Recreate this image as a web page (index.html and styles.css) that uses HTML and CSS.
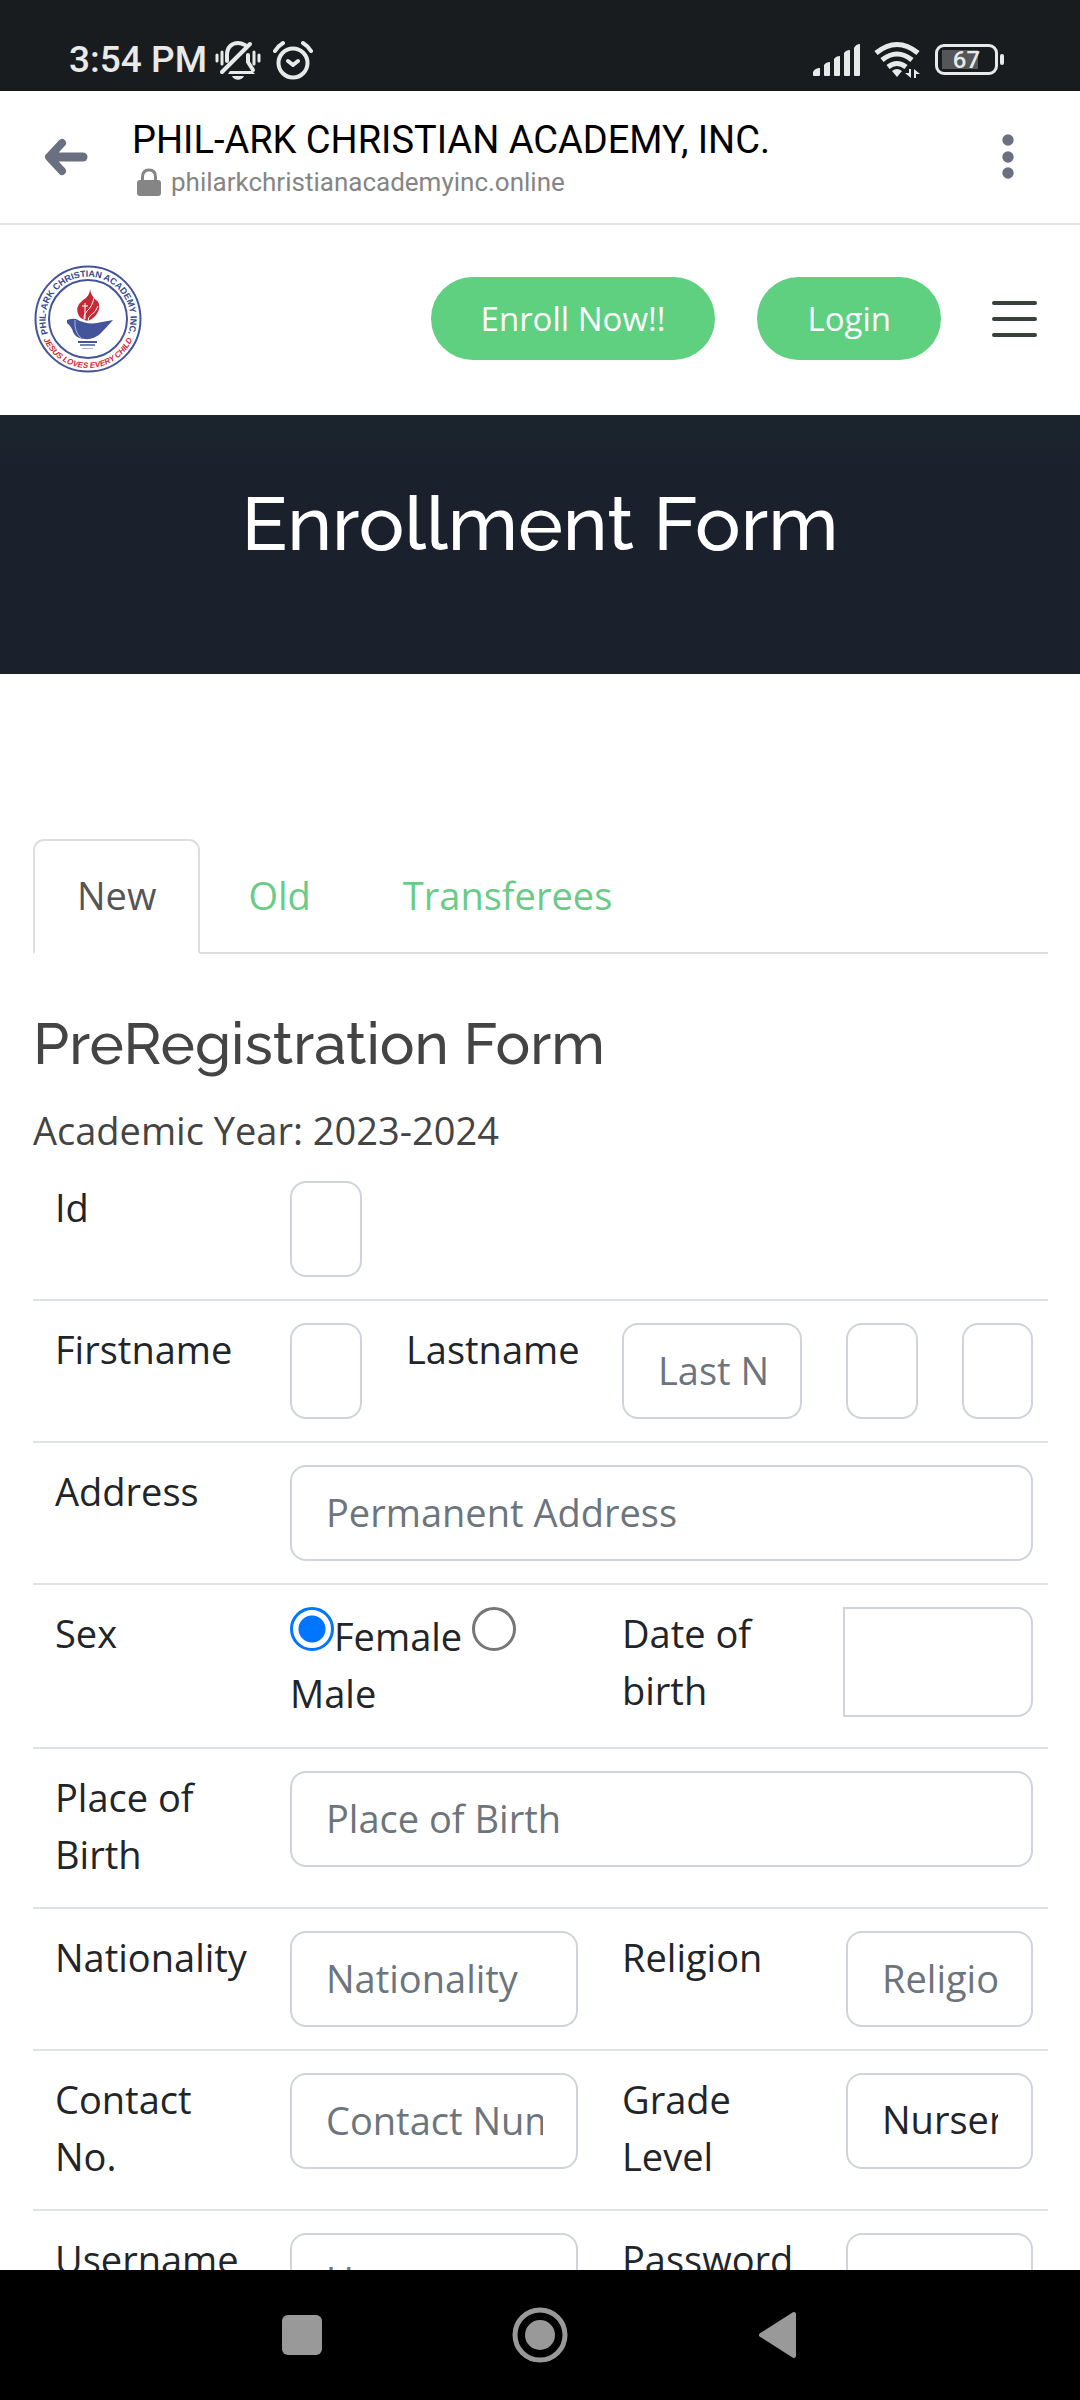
FILE: index.html
```html
<!DOCTYPE html>
<html lang="en">
<head>
<meta charset="utf-8">
<meta name="viewport" content="width=device-width, initial-scale=1">
<title>PHIL-ARK CHRISTIAN ACADEMY, INC.</title>
<link rel="stylesheet" href="styles.css">
</head>
<body>
<div class="status-bar">
  <span class="clock">3:54 PM</span>
  <svg class="status-bell" width="46" height="40" viewBox="0 0 46 40" fill="none" stroke="#e8e9e9" stroke-width="4" stroke-linecap="round" aria-hidden="true">
    <path d="M2 15v6M7 12v12M39 12v12M44 15v6" stroke-width="3"/>
    <path d="M12 21v-6C12 7 17 3 23 3c3 0 5 1 7 2M33 15v7l5 8"/>
    <path d="M7 32L35 4"/>
    <path d="M15 31h22l3 3H13z" fill="#e8e9e9" stroke="none"/>
    <path d="M17 36h12c-2 5-10 5-12 0z" fill="#e8e9e9" stroke="none"/>
  </svg>
  <svg class="status-alarm" width="40" height="40" viewBox="0 0 40 40" fill="none" stroke="#e8e9e9" stroke-width="4" stroke-linecap="round" stroke-linejoin="round" aria-hidden="true">
    <circle cx="20" cy="23" r="14.500"/>
    <path d="M15 21l5 4 5-4M2 11q3-5 8-8M38 11q-3-5-8-8"/>
  </svg>
  <div class="status-right">
    <svg width="48" height="34" viewBox="0 0 48 34" fill="#e8e9e9" aria-hidden="true">
      <path d="M0 32v-3q2-4 7-4v7q0 1-1 1H1q-1 0-1-1zM11 32V22q2-3 6-3v13q0 1-1 1h-4q-1 0-1-1zM21 32V16q2-3 6-3v19q0 1-1 1h-4q-1 0-1-1zM31 32V10q2-3 6-3v25q0 1-1 1h-4q-1 0-1-1zM41 32V5q2-4 6-4v31q0 1-1 1h-4q-1 0-1-1z"/>
    </svg>
    <svg width="48" height="38" viewBox="0 0 48 38" fill="none" stroke="#e8e9e9" stroke-width="5" aria-hidden="true">
      <path d="M2 12q21-17 42 0M8 19q15-12 30 0M14 26q9-7 18 0"/>
      <path d="M18 30q5-4 10 0l-5 6z" fill="#e8e9e9" stroke="none"/>
      <path d="M37 28v9l-6-5h4v-4zM40 37v-9l6 5h-4v4z" fill="#e8e9e9" stroke="none"/>
    </svg>
    <div class="battery"><span class="battery-level">67</span></div>
  </div>
</div>

<div class="browser-bar">
  <button class="icon-button" aria-label="Back">
    <svg width="44" height="38" viewBox="0 0 44 38" fill="none" stroke="#6b7080" stroke-linecap="round" stroke-linejoin="round" aria-hidden="true">
      <path d="M18 5L5 19l13 14" stroke-width="8"/>
      <path d="M8 19h31" stroke-width="9"/>
      <path d="M7 19l7-8v16z" fill="#6b7080" stroke-width="2"/>
    </svg>
  </button>
  <div class="page-info">
    <div class="page-title">PHIL-ARK CHRISTIAN ACADEMY, INC.</div>
    <div class="page-url">
      <svg width="24" height="28" viewBox="0 0 24 28" aria-hidden="true">
        <path d="M5.500 13V9q0-7 6.500-7t6.500 7v4" fill="none" stroke="#858585" stroke-width="3"/>
        <rect y="12" width="24" height="16" rx="3" fill="#858585"/>
      </svg>
      <span>philarkchristianacademyinc.online</span>
    </div>
  </div>
  <button class="icon-button" aria-label="More options">
    <svg width="12" height="46" viewBox="0 0 12 46" fill="#6b7080" aria-hidden="true">
      <circle cx="6" cy="6" r="5.700"/><circle cx="6" cy="23" r="5.700"/><circle cx="6" cy="39" r="5.700"/>
    </svg>
  </button>
</div>

<div class="viewport">
  <header class="site-header">
    <a class="logo" href="#" aria-label="Home">
      <svg width="110" height="110" viewBox="-55 -55 110 110" aria-hidden="true">
        <defs>
          <path id="arc-top" d="M-37 21A42.500 42.500 0 1 1 37 21"/>
          <path id="arc-bottom" d="M-49 0A49 49 0 0 0 49 0"/>
        </defs>
        <circle r="52.500" fill="#fff" stroke="#43549a" stroke-width="2"/>
        <circle r="39" fill="none" stroke="#43549a" stroke-width="2"/>
        <text class="seal-name"><textPath href="#arc-top" startOffset="50%">PHIL-ARK CHRISTIAN ACADEMY INC.</textPath></text>
        <text class="seal-motto"><textPath href="#arc-bottom" startOffset="50%">JESUS LOVES EVERY CHILD</textPath></text>
        <path d="M2-30Q2-23-5-19-14-12-9-3-6 1 0 2 9-2 11-10 12-17 8-19 3-23 2-30z" fill="#c32a36"/>
        <path d="M6-21Q4-12-1-8-5-4-4 1M10-13Q8-7 3-4 0-2 0 2M-3-16V0M-6-13h6" fill="none" stroke="#fff"/>
        <path d="M-21 1q6-2 9-1Q0 7 14 3L25 1Q18 9 12 15 5 21-3 20q-9 0-12-7-1-5-6-9z" fill="#43549a"/>
        <path d="M-13 1q-1 12 6 18" fill="none" stroke="#aeb8d8"/>
        <path d="M-10 23H9" stroke="#43549a" stroke-width="2"/>
        <path d="M-8 26H7" stroke="#7582b4" stroke-width="2"/>
        <path d="M-6 29.500H5" stroke="#aab2d0"/>
      </svg>
    </a>
    <a class="pill" href="#enroll">Enroll Now!!</a>
    <a class="pill" href="#login">Login</a>
    <button class="menu-button" aria-label="Menu"><i></i><i></i><i></i></button>
  </header>

  <section class="hero"><h1>Enrollment Form</h1></section>

  <main class="content">
    <nav class="tabs">
      <a class="tab active" href="#new" aria-current="page">New</a>
      <a class="tab" href="#old">Old</a>
      <a class="tab" href="#transferees">Transferees</a>
    </nav>
    <h2>PreRegistration Form</h2>
    <p class="year">Academic Year: 2023-2024</p>
    <form>
      <table class="form-table">
        <colgroup><col class="col-label"><col class="col-small"><col class="col-mid"><col><col class="col-small"><col class="col-end"></colgroup>
        <tr>
          <th><label for="id">Id</label></th>
          <td><input class="field" id="id" type="text"></td>
          <td colspan="4"></td>
        </tr>
        <tr>
          <th><label for="first">Firstname</label></th>
          <td><input class="field" id="first" type="text"></td>
          <th><label for="last">Lastname</label></th>
          <td><input class="field" id="last" type="text" placeholder="Last Name"></td>
          <td><input class="field" type="text" aria-label="Middle name"></td>
          <td><input class="field" type="text" aria-label="Suffix"></td>
        </tr>
        <tr>
          <th><label for="address">Address</label></th>
          <td colspan="5"><input class="field" id="address" type="text" placeholder="Permanent Address"></td>
        </tr>
        <tr class="tall-row">
          <th>Sex</th>
          <td colspan="2"><input class="radio" type="radio" name="sex" id="female" checked><label for="female">Female</label> <input class="radio" type="radio" name="sex" id="male"> <label for="male">Male</label></td>
          <th><label for="dob">Date of<br>birth</label></th>
          <td class="date-cell" colspan="2"><input class="field date" id="dob" type="text"></td>
        </tr>
        <tr>
          <th><label for="place">Place of Birth</label></th>
          <td colspan="5"><input class="field" id="place" type="text" placeholder="Place of Birth"></td>
        </tr>
        <tr>
          <th><label for="nationality">Nationality</label></th>
          <td colspan="2"><input class="field" id="nationality" type="text" placeholder="Nationality"></td>
          <th><label for="religion">Religion</label></th>
          <td colspan="2"><input class="field" id="religion" type="text" placeholder="Religion"></td>
        </tr>
        <tr>
          <th><label for="contact">Contact No.</label></th>
          <td colspan="2"><input class="field" id="contact" type="text" placeholder="Contact Number"></td>
          <th><label for="grade">Grade Level</label></th>
          <td colspan="2"><select class="field" id="grade"><option>Nursery</option></select></td>
        </tr>
        <tr>
          <th><label for="username">Username</label></th>
          <td colspan="2"><input class="field" id="username" type="text" placeholder="Username"></td>
          <th><label for="password">Password</label></th>
          <td colspan="2"><input class="field" id="password" type="password"></td>
        </tr>
      </table>
    </form>
  </main>
</div>

<nav class="system-nav">
  <button class="icon-button" aria-label="Recent apps"><svg width="40" height="40" viewBox="0 0 40 40"><rect width="40" height="40" rx="6" fill="#999"/></svg></button>
  <button class="icon-button" aria-label="Home screen"><svg width="56" height="56" viewBox="0 0 56 56"><circle cx="28" cy="28" r="25" fill="none" stroke="#999" stroke-width="5"/><circle cx="28" cy="28" r="15" fill="#999"/></svg></button>
  <button class="icon-button" aria-label="Go back"><svg width="40" height="48" viewBox="0 0 40 48"><path d="M36 3v42L3 24z" fill="#999" stroke="#999" stroke-width="4" stroke-linejoin="round"/></svg></button>
</nav>
</body>
</html>
```
FILE: styles.css
```css
* {
  box-sizing: border-box;
}

body {
  margin: 0;
  height: 100vh;
  display: flex;
  flex-direction: column;
  overflow: hidden;
  background: #fff;
  color: #444;
  font: 38px/57px "Open Sans", "Noto Sans", sans-serif;
}

svg {
  display: block;
}

button {
  padding: 0;
  border: 0;
  background: none;
}

a {
  text-decoration: none;
}

/* Phone status bar */
.status-bar {
  flex: none;
  height: 91px;
  padding: 28px 82px 0 69px;
  display: flex;
  align-items: center;
  background: #191c1e;
  color: #e8e9e9;
  font-family: Roboto, sans-serif;
}

.clock {
  font-size: 37px;
  font-weight: 500;
}

.status-bell {
  margin-left: 8px;
}

.status-alarm {
  margin-left: 12px;
}

.status-right {
  margin-left: auto;
  display: flex;
  align-items: center;
  gap: 13px;
}

.battery {
  position: relative;
  width: 63px;
  height: 31px;
  border: 3px solid #e8e9e9;
  border-radius: 9px;
  background: linear-gradient(to right, #555658 36px, transparent 36px) 4px 3px / 52px 19px no-repeat;
  text-align: center;
}

.battery::after {
  content: "";
  position: absolute;
  top: 7px;
  right: -9px;
  width: 4px;
  height: 11px;
  border-radius: 2px;
  background: #e8e9e9;
}

.battery-level {
  display: block;
  font-size: 24px;
  font-weight: 500;
  line-height: 26px;
}

/* In-app browser bar */
.browser-bar {
  flex: none;
  height: 134px;
  padding: 0 66px 0 44px;
  display: flex;
  align-items: center;
  border-bottom: 2px solid #e4e4e4;
  font-family: Roboto, sans-serif;
}

.page-info {
  flex: 1;
  margin-left: 44px;
  padding-top: 4px;
}

.page-title {
  color: #000;
  font-size: 38px;
  line-height: 46px;
  white-space: nowrap;
}

.page-url {
  display: flex;
  align-items: center;
  gap: 10px;
  margin-left: 5px;
  color: #858585;
  font-size: 26px;
  line-height: 38px;
}

.viewport {
  flex: 1;
  min-height: 0;
  overflow: hidden;
}

/* Site header */
.site-header {
  height: 190px;
  padding: 0 43px 3px 33px;
  display: flex;
  align-items: center;
}

.logo {
  margin-right: auto;
}

.seal-name,
.seal-motto {
  font: bold 9px "Liberation Sans", sans-serif;
  text-anchor: middle;
  fill: #33498f;
}

.seal-motto {
  font-size: 8px;
  font-style: italic;
  fill: #d42a34;
}

.pill {
  margin-left: 42px;
  padding: 13px 50px;
  border-radius: 42px;
  background: #5fcf80;
  color: #fff;
  font-size: 33px;
}

.menu-button {
  margin-left: 51px;
  width: 45px;
  display: grid;
  gap: 12px;
}

.menu-button i {
  height: 4px;
  border-radius: 2px;
  background: #37423b;
}

.hero {
  height: 259px;
  padding-top: 63px;
  background: linear-gradient(#1b252d, #1b212c 48px);
  text-align: center;
}

h1,
h2 {
  margin: 0;
  font-family: Raleway, Lato, sans-serif;
  font-weight: 500;
}

h1 {
  color: #fff;
  font-size: 76px;
  line-height: 92px;
}

/* Registration form */
.content {
  padding: 165px 32px 0 33px;
}

.tabs {
  display: flex;
  gap: 4px;
  border-bottom: 2px solid #dcdddd;
}

.tab {
  margin-bottom: -2px;
  padding: 26px 42px 28px;
  border: 2px solid transparent;
  border-radius: 11px 11px 0 0;
  color: #6acb86;
}

.tab.active {
  border-color: #dcdddd #dcdddd #fff;
  background: #fff;
  color: #555;
}

h2 {
  margin-top: 55px;
  font-size: 58px;
  line-height: 70px;
}

.year {
  margin: 23px 0 0;
}

.form-table {
  width: 100%;
  table-layout: fixed;
  border-collapse: separate;
  border-spacing: 0;
  color: #212529;
}

.col-label {
  width: 235px;
}

.col-small {
  width: 116px;
}

.col-mid {
  width: 216px;
}

.col-end {
  width: 108px;
}

th,
td {
  padding: 22px;
  border-bottom: 2px solid #dee2e6;
  vertical-align: top;
  text-align: left;
  font-weight: 400;
}

th {
  padding-top: 20px;
  padding-bottom: 24px;
}

td:last-child {
  padding-right: 15px;
}

.tall-row {
  height: 164px;
}

.field {
  display: block;
  width: 100%;
  height: 96px;
  margin: 0;
  padding: 0 33px 3px 34px;
  appearance: none;
  border: 2px solid #ced4da;
  border-radius: 16px;
  background: #fff;
  color: #212529;
  font: inherit;
}

select.field {
  text-overflow: clip;
}

.field::placeholder {
  color: #6c757d;
  opacity: 1;
}

.date-cell {
  padding-left: 19px;
}

.date {
  height: 110px;
  border-radius: 0 16px 16px 0;
}

.radio {
  appearance: none;
  width: 44px;
  height: 44px;
  margin: 0;
  border: 3px solid #767676;
  border-radius: 50%;
}

.radio:checked {
  border-color: #0075ff;
  background: radial-gradient(circle, #0075ff 13px, #fff 14px);
}

/* System navigation */
.system-nav {
  flex: none;
  height: 130px;
  display: flex;
  align-items: center;
  justify-content: center;
  gap: 190px;
  background: #000;
}
```
